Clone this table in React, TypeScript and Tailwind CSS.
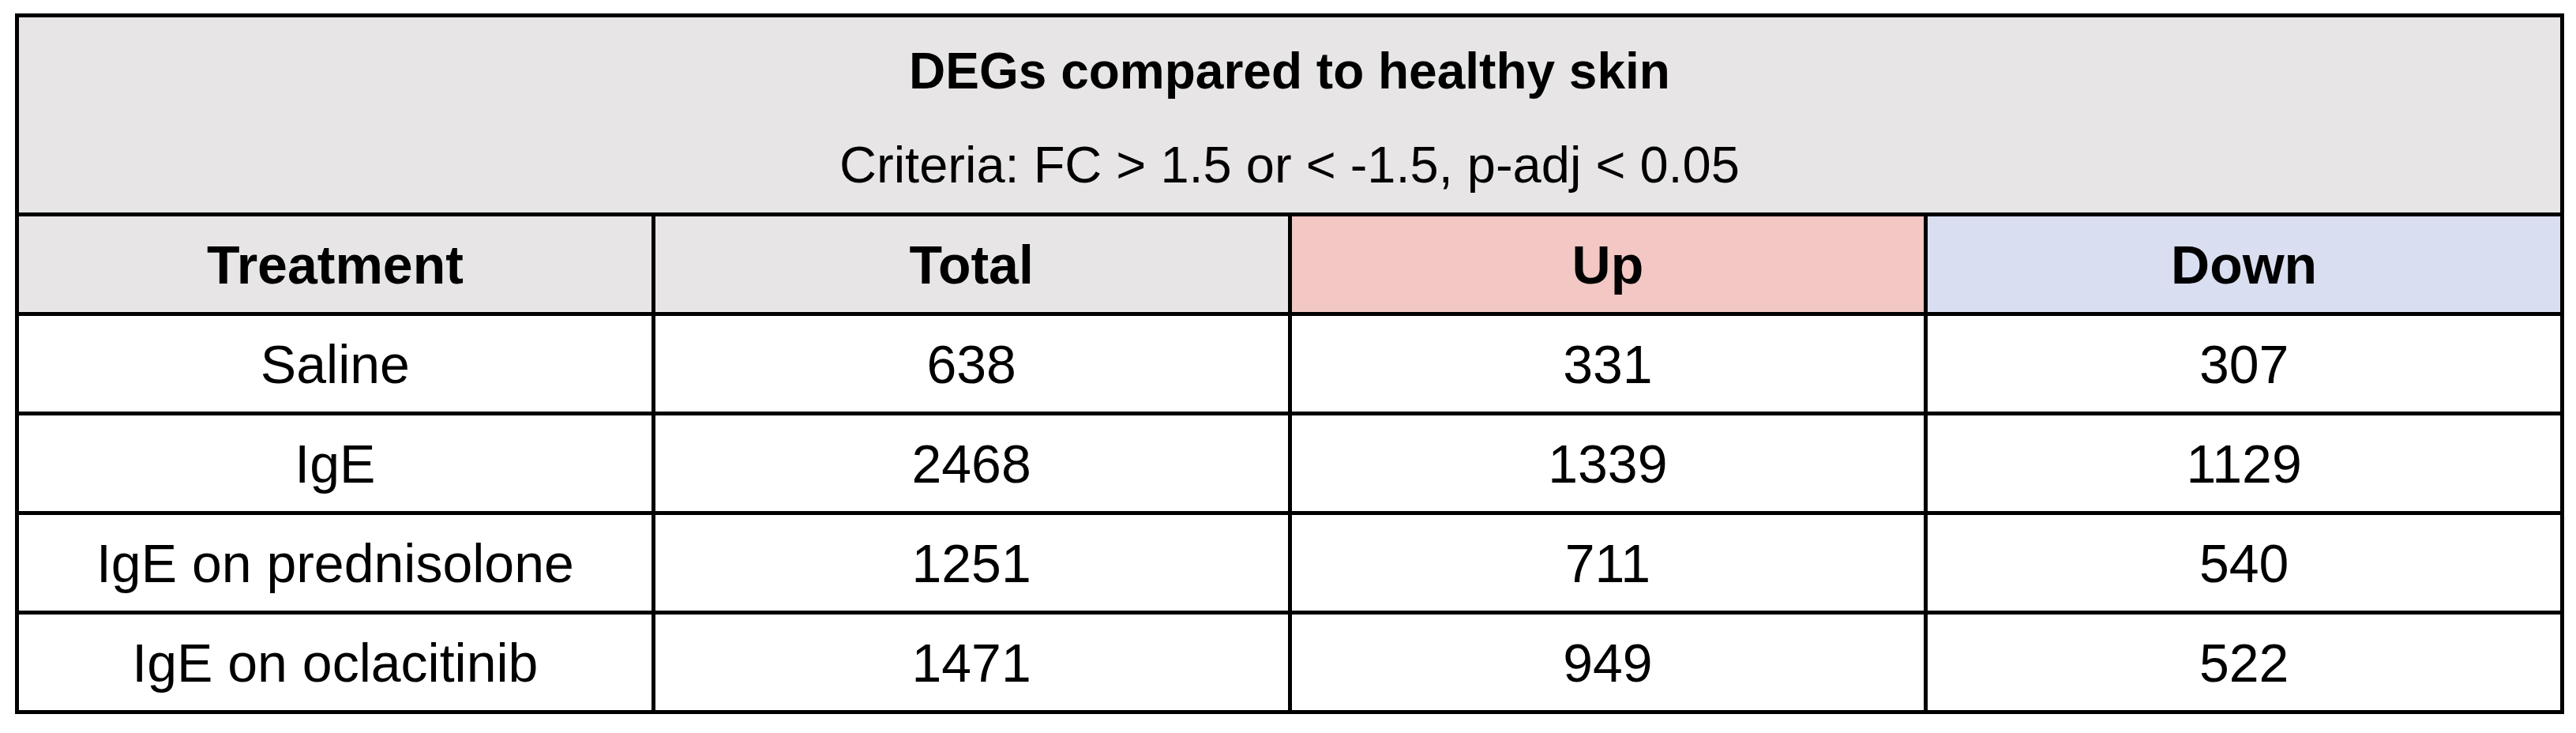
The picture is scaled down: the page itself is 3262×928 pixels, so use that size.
import React from "react";

const rows = [
  ["Saline", "638", "331", "307"],
  ["IgE", "2468", "1339", "1129"],
  ["IgE on prednisolone", "1251", "711", "540"],
  ["IgE on oclacitinib", "1471", "949", "522"],
];

export default function App() {
  return (
    <div
      className="w-[3262px] h-[928px] bg-white pt-[17px] pl-[19px]"
      style={{ fontFamily: '"Liberation Sans", Arial, sans-serif' }}
    >
      <div className="w-[3228px] bg-black p-[5px] grid grid-cols-4 gap-[5px] text-black">
        <div className="col-span-4 h-[247px] bg-[#e7e5e6] flex flex-col items-center pt-[36px]">
          <div className="text-[64px] leading-none font-bold">DEGs compared to healthy skin</div>
          <div className="text-[65px] leading-none mt-[54px]">Criteria: FC &gt; 1.5 or &lt; -1.5, p-adj &lt; 0.05</div>
        </div>
        <div className="h-[121px] bg-[#e7e5e6] flex items-center justify-center text-[68px] leading-none font-bold">Treatment</div>
        <div className="h-[121px] bg-[#e7e5e6] flex items-center justify-center text-[68px] leading-none font-bold">Total</div>
        <div className="h-[121px] bg-[#f2c7c4] flex items-center justify-center text-[68px] leading-none font-bold">Up</div>
        <div className="h-[121px] bg-[#d9dff1] flex items-center justify-center text-[68px] leading-none font-bold">Down</div>
        {rows.map((r) =>
          r.map((c, i) => (
            <div
              key={r[0] + i}
              className="h-[121px] bg-white flex items-center justify-center text-[68px] leading-none"
            >
              {c}
            </div>
          ))
        )}
      </div>
    </div>
  );
}
